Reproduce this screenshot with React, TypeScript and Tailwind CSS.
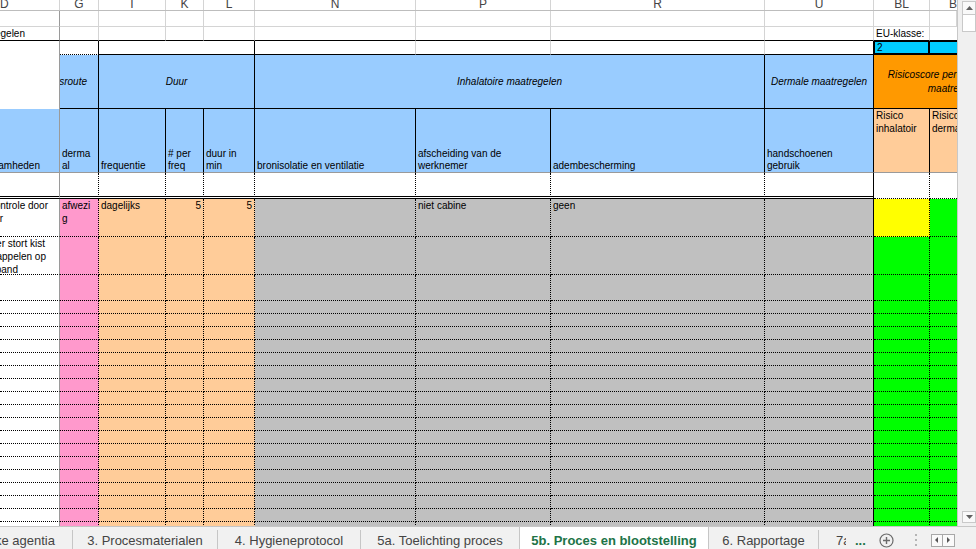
const COLS =
  "grid grid-cols-[60px_39px_67px_38px_51px_161px_135px_214px_109px_56px_27px]";

const LIGHT = "border-r border-b border-r-[#d4d4d4] border-b-[#d4d4d4]";
const FREEZE = "border-r border-r-[#9a9a9a]";
const DOTTED = "border-r border-b border-black border-dotted";

function ColumnHeaders() {
  const letters = ["G", "I", "K", "L", "N", "P", "R", "U", "BL"];
  return (
    <div className={`${COLS} h-[11px] border-b border-b-[#bdbdbd] bg-white text-[12px] text-[#444]`}>
      <div className="border-r border-r-[#d4d4d4] flex items-start overflow-hidden">
        <span className="-mt-[2px] leading-[12px]">D</span>
      </div>
      {letters.map((l) => (
        <div key={l} className="border-r border-r-[#d4d4d4] flex items-start justify-center overflow-hidden">
          <span className="-mt-[2px] leading-[12px]">{l}</span>
        </div>
      ))}
      <div className="overflow-hidden">
        <div className="w-[56px] flex justify-center">
          <span className="-mt-[2px] leading-[12px]">BM</span>
        </div>
      </div>
    </div>
  );
}

function TopRows() {
  return (
    <>
      {/* row 1 */}
      <div className={`${COLS} h-[16px]`}>
        <div className={`${FREEZE} border-b border-b-[#d4d4d4]`} />
        {Array.from({ length: 10 }).map((_, i) => (
          <div key={i} className={LIGHT} />
        ))}
      </div>

      {/* row 2 */}
      <div className={`${COLS} h-[14px] leading-[13px]`}>
        <div className={`${FREEZE} border-b border-b-black flex justify-end pr-[34px] overflow-hidden whitespace-nowrap`}>
          Beheersmaatregelen
        </div>
        {Array.from({ length: 8 }).map((_, i) => (
          <div key={i} className="border-r border-b border-r-[#d4d4d4] border-b-black" />
        ))}
        <div className="border-r border-b border-r-[#d4d4d4] border-b-black pl-[2px] whitespace-nowrap">
          EU-klasse:
        </div>
        <div className="border-b border-b-black" />
      </div>

      {/* row 3 */}
      <div className={`${COLS} h-[14px]`}>
        <div className={FREEZE} />
        <div className="border-r border-b border-r-black border-b-black [border-bottom-style:dotted]" />
        <div className="col-span-3 border-r border-b border-black" />
        <div className="border-r border-b border-r-[#d4d4d4] border-b-black" />
        <div className="border-r border-b border-r-[#d4d4d4] border-b-black" />
        <div className="border-r border-b border-r-[#d4d4d4] border-b-black" />
        <div className="border-r border-b border-black" />
        <div className="bg-[#00ccff] border-l border-t border-r-2 border-b-2 border-black pl-[2px] flex items-center leading-[10px]">
          2
        </div>
        <div className="bg-[#00ccff] border-t border-b-2 border-black" />
      </div>

      {/* row 4 */}
      <div className={`${COLS} h-[54px] italic`}>
        <div className={`${FREEZE} bg-white`} />
        <div className="bg-[#99ccff] border-r border-b border-black flex items-center justify-end pr-[11px] overflow-hidden whitespace-nowrap">
          Blootstellingsroute
        </div>
        <div className="col-span-3 bg-[#99ccff] border-r border-b border-black flex items-center justify-center">
          Duur
        </div>
        <div className="col-span-3 bg-[#99ccff] border-r border-b border-black flex items-center justify-center">
          Inhalatoire maatregelen
        </div>
        <div className="bg-[#99ccff] border-r border-b border-black flex items-center justify-center whitespace-nowrap">
          Dermale maatregelen
        </div>
        <div className="col-span-2 bg-[#ff9900] border-b border-black flex items-center overflow-hidden">
          <div className="w-[152px] shrink-0 text-center leading-[14px] whitespace-nowrap">
            Risicoscore per blootstelling
            <br />
            maatregel
          </div>
        </div>
      </div>

      {/* row 5 */}
      <div className={`${COLS} h-[64px] leading-[12px]`}>
        <div className="bg-[#99ccff] border-r border-b border-[#9a9a9a] flex items-end justify-end pr-[19px] overflow-hidden whitespace-nowrap">
          Werkzaamheden
        </div>
        <div className="bg-[#99ccff] border-r border-b border-r-black border-b-[#9a9a9a] flex items-end pl-[2px]">
          <span>
            derma
            <br />
            al
          </span>
        </div>
        <div className="bg-[#99ccff] border-r border-b border-r-black border-b-[#9a9a9a] flex items-end pl-[2px]">
          frequentie
        </div>
        <div className="bg-[#99ccff] border-r border-b border-r-black border-b-[#9a9a9a] flex items-end pl-[2px]">
          <span>
            # per
            <br />
            freq
          </span>
        </div>
        <div className="bg-[#99ccff] border-r border-b border-r-black border-b-[#9a9a9a] flex items-end pl-[2px]">
          <span>
            duur in
            <br />
            min
          </span>
        </div>
        <div className="bg-[#99ccff] border-r border-b border-r-black border-b-[#9a9a9a] flex items-end pl-[2px]">
          bronisolatie en ventilatie
        </div>
        <div className="bg-[#99ccff] border-r border-b border-r-black border-b-[#9a9a9a] flex items-end pl-[2px]">
          <span>
            afscheiding van de
            <br />
            werknemer
          </span>
        </div>
        <div className="bg-[#99ccff] border-r border-b border-r-black border-b-[#9a9a9a] flex items-end pl-[2px]">
          adembescherming
        </div>
        <div className="bg-[#99ccff] border-r border-b border-r-black border-b-[#9a9a9a] flex items-end pl-[2px]">
          <span>
            handschoenen
            <br />
            gebruik
          </span>
        </div>
        <div className="bg-[#ffcc99] border-r border-b border-r-black border-b-[#9a9a9a] pl-[2px] pt-px leading-[12.5px]">
          Risico
          <br />
          inhalatoir
        </div>
        <div className="bg-[#ffcc99] border-b border-b-[#9a9a9a] pl-[2px] pt-px leading-[12.5px] overflow-hidden whitespace-nowrap">
          Risico
          <br />
          dermaal
        </div>
      </div>

      {/* row 6 */}
      <div className={`${COLS} h-[26px]`}>
        <div className={`${FREEZE} border-b-[3px] border-b-black [border-bottom-style:double]`} />
        {Array.from({ length: 7 }).map((_, i) => (
          <div
            key={i}
            className="border-r border-r-black [border-right-style:dotted] border-b-[3px] border-b-black [border-bottom-style:double]"
          />
        ))}
        <div className="border-r border-r-black border-b-[3px] border-b-black [border-bottom-style:double]" />
        <div className={DOTTED} />
        <div className="border-b border-black border-dotted" />
      </div>
    </>
  );
}

type DataCells = {
  d?: { text: string; pr: string }[];
  g?: string[];
  i?: string;
  k?: string;
  l?: string;
  p?: string;
  r?: string;
};

const rows: { h: string; yellow?: boolean; cells: DataCells }[] = [
  {
    h: "h-[38px]",
    yellow: true,
    cells: {
      d: [
        { text: "Visuele controle door", pr: "pr-[11px]" },
        { text: "chauffeur", pr: "pr-[56px]" },
      ],
      g: ["afwezi", "g"],
      i: "dagelijks",
      k: "5",
      l: "5",
      p: "niet cabine",
      r: "geen",
    },
  },
  {
    h: "h-[38px]",
    cells: {
      d: [
        { text: "Medewerker stort kist", pr: "pr-[14px]" },
        { text: "met aardappelen op", pr: "pr-[13px]" },
        { text: "de lopende band", pr: "pr-[41px]" },
      ],
    },
  },
  { h: "h-[26px]", cells: {} },
  ...Array.from({ length: 18 }).map(() => ({ h: "h-[13px]", cells: {} as DataCells })),
];

function DataRow({ h, yellow, cells }: { h: string; yellow?: boolean; cells: DataCells }) {
  return (
    <div className={`${COLS} ${h} leading-[13px]`}>
      <div className="bg-white border-r border-b border-r-[#9a9a9a] border-b-black [border-bottom-style:dotted] overflow-hidden whitespace-nowrap">
        {cells.d?.map((line) => (
          <div key={line.text} className={`flex justify-end ${line.pr}`}>
            {line.text}
          </div>
        ))}
      </div>
      <div className={`bg-[#ff99cc] ${DOTTED} pl-[2px]`}>
        {cells.g?.map((t) => (
          <div key={t}>{t}</div>
        ))}
      </div>
      <div className={`bg-[#ffcc99] ${DOTTED} pl-[2px]`}>{cells.i}</div>
      <div className={`bg-[#ffcc99] ${DOTTED} pr-[2px] text-right`}>{cells.k}</div>
      <div className={`bg-[#ffcc99] ${DOTTED} pr-[2px] text-right`}>{cells.l}</div>
      <div className={`bg-[#c0c0c0] ${DOTTED}`} />
      <div className={`bg-[#c0c0c0] ${DOTTED} pl-[2px]`}>{cells.p}</div>
      <div className={`bg-[#c0c0c0] ${DOTTED} pl-[2px]`}>{cells.r}</div>
      <div className="bg-[#c0c0c0] border-r border-b border-r-black border-b-black [border-bottom-style:dotted]" />
      <div className={`${yellow ? "bg-[#ffff00]" : "bg-[#00ff00]"} ${DOTTED}`} />
      <div className="bg-[#00ff00] border-b border-black border-dotted" />
    </div>
  );
}

function ScrollBar() {
  return (
    <div className="w-[19px] h-[526px] bg-[#f0f0f0] border-l border-l-[#c8c8c8] flex flex-col">
      <div className="ml-[4px] mt-[1px] w-[14px] h-[14px] border border-[#c9c9c9] bg-[#f9f9f9] flex items-center justify-center">
        <svg width="7" height="4" viewBox="0 0 7 4">
          <path d="M0 4 L3.5 0 L7 4 Z" fill="#606060" />
        </svg>
      </div>
      <div className="ml-[4px] w-[14px] h-[17px] border border-t-0 border-[#c9c9c9] bg-white" />
      <div className="mt-auto mb-[3px] ml-[4px] w-[14px] h-[12px] border border-[#c9c9c9] bg-[#f9f9f9] flex items-center justify-center">
        <svg width="7" height="4" viewBox="0 0 7 4">
          <path d="M0 0 L3.5 4 L7 0 Z" fill="#606060" />
        </svg>
      </div>
    </div>
  );
}

function Sep() {
  return <div className="w-px self-end h-[19px] bg-[#c6c6c6] shrink-0" />;
}

function SheetTabs() {
  return (
    <div className="flex h-[23px] border-t border-t-[#c6c6c6] bg-[#f1f1f1] text-[13px] text-[#444] leading-[15px] font-['Liberation_Sans',Arial,sans-serif]">
      <div className="w-[72px] shrink-0 flex items-center justify-end pr-[17px] pt-[5px] overflow-hidden whitespace-nowrap">
        2. Gevaarlijke agentia
      </div>
      <Sep />
      <div className="w-[144px] shrink-0 flex items-center justify-center pt-[5px] whitespace-nowrap">
        3. Procesmaterialen
      </div>
      <Sep />
      <div className="w-[142px] shrink-0 flex items-center justify-center pt-[5px] whitespace-nowrap">
        4. Hygieneprotocol
      </div>
      <Sep />
      <div className="w-[158px] shrink-0 flex items-center justify-center pt-[5px] whitespace-nowrap">
        5a. Toelichting proces
      </div>
      <div className="w-[190px] shrink-0 bg-white border-x border-x-[#c6c6c6] flex items-center justify-center pt-[5px] whitespace-nowrap font-bold text-[#217346]">
        5b. Proces en blootstelling
      </div>
      <div className="w-[109px] shrink-0 flex items-center justify-center pt-[5px] whitespace-nowrap">
        6. Rapportage
      </div>
      <Sep />
      <div className="w-[27px] shrink-0 flex items-center pl-[17px] pt-[5px] overflow-hidden whitespace-nowrap">
        <span className="shrink-0">7a</span>
      </div>
      <div className="ml-[9px] flex items-center pt-[5px] font-bold text-[#217346]">...</div>
      <div className="ml-[13px] flex items-center pt-[5px]">
        <svg width="15" height="15" viewBox="0 0 15 15">
          <circle cx="7.5" cy="7.5" r="6.5" fill="none" stroke="#6b6b6b" strokeWidth="1.2" />
          <path d="M7.5 4 V11 M4 7.5 H11" stroke="#6b6b6b" strokeWidth="1.4" />
        </svg>
      </div>
      <div className="ml-[21px] flex flex-col justify-center gap-[3px] pt-[4px]">
        <div className="w-[2px] h-[2px] bg-[#b5b5b5]" />
        <div className="w-[2px] h-[2px] bg-[#b5b5b5]" />
        <div className="w-[2px] h-[2px] bg-[#b5b5b5]" />
      </div>
      <div className="ml-[14px] flex items-center pt-[4px]">
        <div className="flex h-[13px] border border-[#a8a8a8] bg-[#fafafa]">
          <div className="w-[11px] flex items-center justify-center border-r border-r-[#a8a8a8]">
            <svg width="3" height="6" viewBox="0 0 3 6">
              <path d="M3 0 L0 3 L3 6 Z" fill="#555" />
            </svg>
          </div>
          <div className="w-[11px] flex items-center justify-center">
            <svg width="3" height="6" viewBox="0 0 3 6">
              <path d="M0 0 L3 3 L0 6 Z" fill="#555" />
            </svg>
          </div>
        </div>
      </div>
    </div>
  );
}

export default function App() {
  return (
    <div className="w-[976px] h-[549px] overflow-hidden bg-white flex flex-col font-['Liberation_Sans',Arial,sans-serif] text-[10px] text-black">
      <div className="flex h-[526px]">
        <div className="w-[957px] h-[526px] overflow-hidden">
          <ColumnHeaders />
          <TopRows />
          {rows.map((r, idx) => (
            <DataRow key={idx} h={r.h} yellow={r.yellow} cells={r.cells} />
          ))}
        </div>
        <ScrollBar />
      </div>
      <SheetTabs />
    </div>
  );
}
